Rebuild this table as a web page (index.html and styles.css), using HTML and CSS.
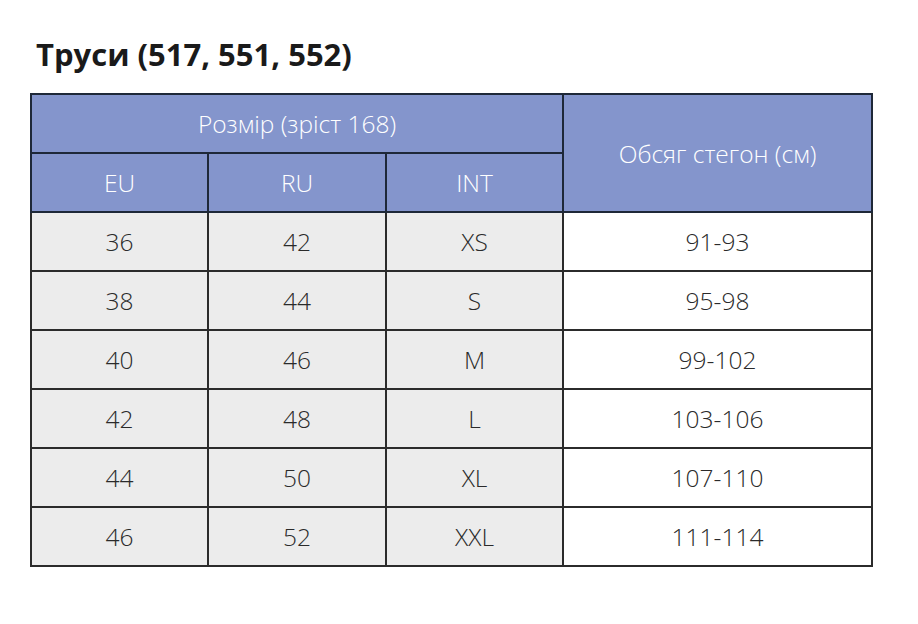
FILE: index.html
```html
<!DOCTYPE html>
<html lang="uk">
<head>
<meta charset="utf-8">
<title>Труси</title>
<link rel="stylesheet" href="styles.css">
</head>
<body>
<div class="page">
  <h1 class="title">Труси (517, 551, 552)</h1>
  <table class="sizes">
    <colgroup>
      <col class="c1"><col class="c2"><col class="c3"><col class="c4">
    </colgroup>
    <thead>
      <tr>
        <th colspan="3">Розмір (зріст 168)</th>
        <th rowspan="2">Обсяг стегон (см)</th>
      </tr>
      <tr>
        <th>EU</th><th>RU</th><th>INT</th>
      </tr>
    </thead>
    <tbody>
      <tr><td>36</td><td>42</td><td>XS</td><td class="w">91-93</td></tr>
      <tr><td>38</td><td>44</td><td>S</td><td class="w">95-98</td></tr>
      <tr><td>40</td><td>46</td><td>M</td><td class="w">99-102</td></tr>
      <tr><td>42</td><td>48</td><td>L</td><td class="w">103-106</td></tr>
      <tr><td>44</td><td>50</td><td>XL</td><td class="w">107-110</td></tr>
      <tr><td>46</td><td>52</td><td>XXL</td><td class="w">111-114</td></tr>
    </tbody>
  </table>
</div>
</body>
</html>
```
FILE: styles.css
```css
html, body {
  margin: 0;
  padding: 0;
  background: #ffffff;
}
.page {
  padding: 34px 0 0 30px;
  font-family: "Open Sans", "Noto Sans", sans-serif;
}
.title {
  margin: 0 0 18px 6px;
  font-size: 31px;
  line-height: 41px;
  font-weight: 700;
  color: #1a1a1a;
  letter-spacing: 0;
}
.sizes {
  border-collapse: collapse;
  width: 841px;
  table-layout: fixed;
}
.c1 { width: 177px; }
.c2 { width: 178px; }
.c3 { width: 177px; }
.c4 { width: 309px; }
.sizes th,
.sizes td {
  height: 57px;
  padding: 0;
  text-align: center;
  vertical-align: middle;
  font-size: 24.5px;
  font-weight: 300;
  border: 2px solid #2b2b2b;
}
.sizes th {
  background: #8495cc;
  color: #ffffff;
  border-color: #1e2838;
}
.sizes td {
  background: #ececec;
  color: #2a2a2a;
}
.sizes td.w {
  background: #ffffff;
}
```
